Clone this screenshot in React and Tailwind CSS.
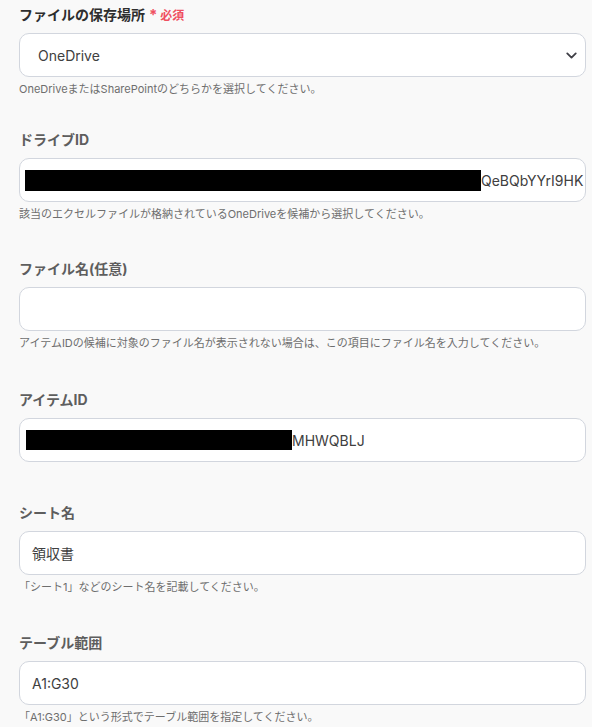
import { ChevronDown } from 'lucide-react';

const font = { fontFamily: 'Inter, "Noto Sans CJK JP", sans-serif' };

function Label({ children, dark }) {
  return (
    <div className={`h-5 text-[14px] leading-5 font-bold ${dark ? 'text-[#2e2e2e]' : 'text-[#5e5e5e]'}`}>
      {children}
    </div>
  );
}

function Box({ children, className = 'px-3' }) {
  return (
    <div className={`mt-2 h-[44px] rounded-[10px] border border-[#d2d6de] bg-white flex items-center overflow-hidden whitespace-nowrap text-[14px] text-[#404040] ${className}`}>
      {children}
    </div>
  );
}

function Help({ children }) {
  return <div className="mt-1 h-4 text-[11px] leading-4 text-[#6e6e6e]">{children}</div>;
}

export default function App() {
  return (
    <div className="min-h-screen bg-[#f9f9f9] pl-[19px] pr-[6px] pt-[5px]" style={font}>

      <div className="mb-[33px]">
        <Label dark>
          ファイルの保存場所
          <span className="ml-1 text-[#ef4f5f] text-[12px]"><span className="text-[15px] leading-none">*</span> 必須</span>
        </Label>
        <Box className="pl-[18px] pr-[5px] justify-between">
          <span>OneDrive</span>
          <ChevronDown size={17} strokeWidth={2.6} className="text-[#3f3f46]" />
        </Box>
        <Help>OneDriveまたはSharePointのどちらかを選択してください。</Help>
      </div>

      <div className="mb-[37px]">
        <Label>ドライブID</Label>
        <Box className="pl-[5px]">
          <span className="inline-block w-[456px] h-[21px] bg-black shrink-0"></span>
          <span className="shrink-0">QeBQbYYrI9HK</span>
        </Box>
        <Help>該当のエクセルファイルが格納されているOneDriveを候補から選択してください。</Help>
      </div>

      <div className="mb-[39px]">
        <Label>ファイル名(任意)</Label>
        <Box />
        <Help>アイテムIDの候補に対象のファイル名が表示されない場合は、この項目にファイル名を入力してください。</Help>
      </div>

      <div className="mb-[41px]">
        <Label>アイテムID</Label>
        <Box className="pl-[6px]">
          <span className="inline-block w-[266px] h-[20px] bg-black shrink-0"></span>
          <span>MHWQBLJ</span>
        </Box>
      </div>

      <div className="mb-[38px]">
        <Label>シート名</Label>
        <Box>領収書</Box>
        <Help>「シート1」などのシート名を記載してください。</Help>
      </div>

      <div className="pb-4">
        <Label>テーブル範囲</Label>
        <Box>A1:G30</Box>
        <Help>「A1:G30」という形式でテーブル範囲を指定してください。</Help>
      </div>

    </div>
  );
}
